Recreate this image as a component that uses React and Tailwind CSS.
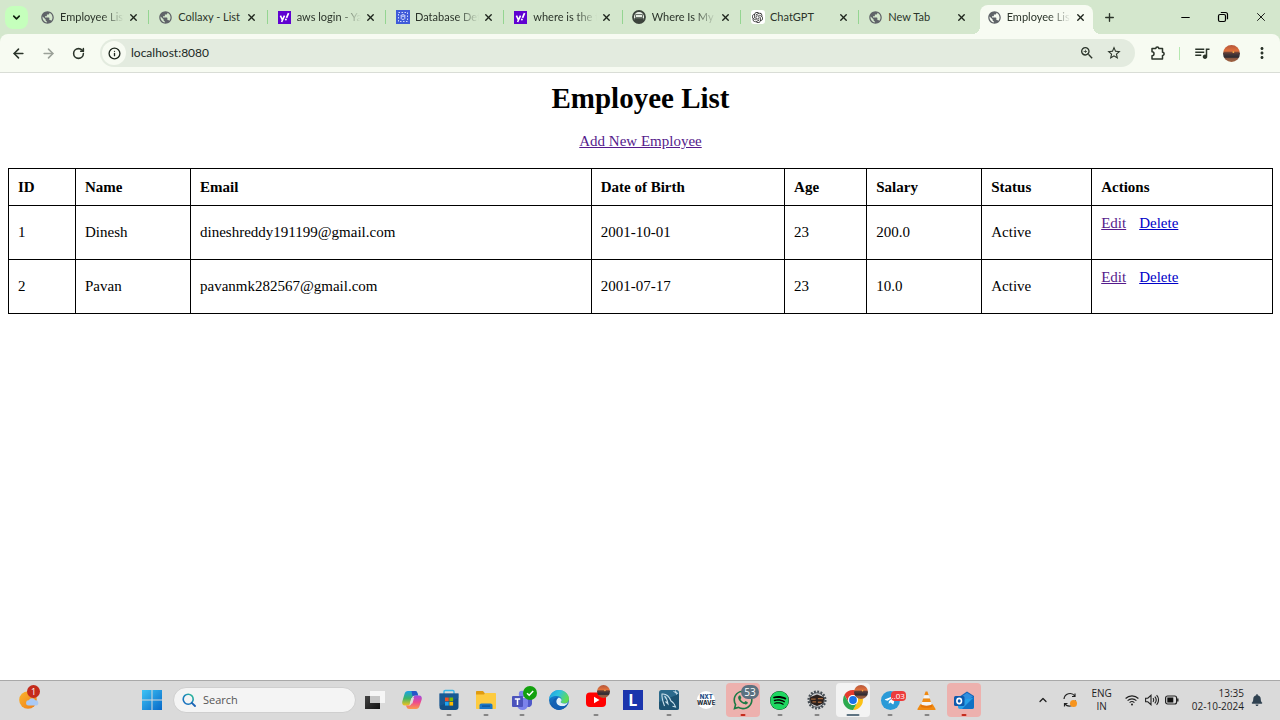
import React from "react";
import {
  MdPublic,
  MdQueueMusic,
  MdZoomIn,
  MdStarBorder,
  MdMoreVert,
} from "react-icons/md";
import { FaSpotify, FaWhatsapp, FaTelegramPlane, FaBell } from "react-icons/fa";
import { SiOpenai } from "react-icons/si";
import { ArrowLeft, ArrowRight, RotateCw, Info, X, Plus, ChevronDown, ChevronUp, Minus } from "lucide-react";

const Globe = () => <MdPublic className="size-[15px] text-[#5f6368]" />;

const Yahoo = () => (
  <svg viewBox="0 0 13 13" className="size-[13px]">
    <rect width="13" height="13" fill="#5f01d1" />
    <path d="M2.4 4.6 4.3 8.6M6.5 4.6 3.6 11" stroke="#fff" strokeWidth="1.6" fill="none" />
    <path d="M10.6 2.2 8.5 6.8" stroke="#fff" strokeWidth="1.7" />
    <circle cx="7.9" cy="8.6" r="1" fill="#fff" />
  </svg>
);

const Rds = () => (
  <svg viewBox="0 0 14 14" className="size-[14px]">
    <rect width="14" height="14" fill="#3f5bd9" />
    <g fill="none" stroke="#dfe6ff" strokeWidth=".9">
      <rect x="2.500" y="2.500" width="9" height="9" strokeDasharray="1.500 1.500" />
      <ellipse cx="7" cy="5.500" rx="1.800" ry=".8" />
      <path d="M5.200 5.500v3c0 1.200 3.600 1.200 3.600 0v-3" />
    </g>
  </svg>
);

const Train = () => (
  <svg viewBox="0 0 14 14" className="size-[14px]">
    <circle cx="7" cy="7" r="6" fill="#e8eee5" stroke="#3c443c" strokeWidth="1.800" />
    <path d="M2.500 8h9v2.500a6 6 0 0 1-9 0z" fill="#3c443c" />
    <rect x="3" y="4" width="8" height="4.500" rx="1" fill="#6a736a" />
    <rect x="4" y="5" width="6" height="2" fill="#e4ebe1" />
  </svg>
);

const ChatGpt = () => (
  <span className="flex size-[14px] items-center justify-center rounded-[3px] bg-white">
    <SiOpenai className="size-[11px] text-[#222]" />
  </span>
);

const tabs = [
  { title: "Employee List", icon: Globe },
  { title: "Collaxy - List", icon: Globe, short: true },
  { title: "aws login - Ya", icon: Yahoo },
  { title: "Database Det", icon: Rds },
  { title: "where is the t", icon: Yahoo },
  { title: "Where Is My", icon: Train },
  { title: "ChatGPT", icon: ChatGpt, short: true },
  { title: "New Tab", icon: Globe, short: true },
  { title: "Employee List", icon: Globe, active: true },
];

function Tab({ title, icon: Icon, active, last, short }) {
  return (
    <div className="relative flex h-full items-end">
      {active && (
        <div className="absolute top-[5px] right-[3px] bottom-0 left-[2px] rounded-t-lg bg-[#f7fbf2]">
          <span className="absolute bottom-0 -left-2 size-2 bg-[radial-gradient(circle_at_top_left,transparent_8px,#f7fbf2_8px)]" />
          <span className="absolute -right-2 bottom-0 size-2 bg-[radial-gradient(circle_at_top_right,transparent_8px,#f7fbf2_8px)]" />
        </div>
      )}
      <div className="relative flex h-full w-full items-center pr-[10px] pl-[9px]">
        <button
          role="tab"
          aria-selected={!!active}
          className="flex min-w-0 flex-1 items-center gap-[5px] text-left"
        >
          <span className="flex w-[15px] shrink-0 justify-center">
            <Icon />
          </span>
          <span
            className={
              short
                ? "whitespace-nowrap"
                : "whitespace-nowrap [mask-image:linear-gradient(to_right,black_42px,transparent_64px)]"
            }
          >
            {title}
          </span>
        </button>
        <button aria-label={`Close ${title}`} className="flex size-[12px] shrink-0 items-center justify-center">
          <X className="size-[11px] text-[#1d241c]" strokeWidth={3} />
        </button>
      </div>
      {!active && !last && (
        <span className="absolute top-[10px] right-0 h-[14px] w-px bg-[#94d591]" />
      )}
    </div>
  );
}

const Avatar = ({ className }) => (
  <svg viewBox="0 0 18 18" className={className}>
    <defs>
      <linearGradient id="sunset" x1="0" y1="0" x2="0" y2="1">
        <stop offset="0" stopColor="#b5563a" />
        <stop offset=".35" stopColor="#e0703c" />
        <stop offset=".5" stopColor="#4b3a3b" />
        <stop offset=".72" stopColor="#2e2a30" />
        <stop offset=".8" stopColor="#8d5a43" />
        <stop offset="1" stopColor="#a0603f" />
      </linearGradient>
    </defs>
    <circle cx="9" cy="9" r="9" fill="url(#sunset)" />
    <path d="M1 8h16v1.500H1z" fill="#5a3a35" />
    <circle cx="11" cy="7.500" r="1" fill="#ffb347" />
  </svg>
);

function Browser() {
  return (
    <header className="font-['Lato','Open_Sans',sans-serif] text-[#2b342a]">
      <div className="flex h-[34px] items-center bg-[#d4e7cd] text-[11px]">
        <button
          aria-label="Search tabs"
          className="ml-[5px] flex size-[23px] shrink-0 items-center justify-center rounded-lg bg-[#c5ffbc]"
        >
          <ChevronDown className="size-[11px] text-[#10200f]" strokeWidth={3.500} />
        </button>
        <div role="tablist" className="ml-[3px] grid h-full max-w-[1065px] flex-1 grid-cols-9">
          {tabs.map((t, i) => (
            <Tab key={i} {...t} last={i === 7} />
          ))}
        </div>
        <button aria-label="New tab" className="ml-[6px] flex size-[14px] items-center justify-center">
          <Plus className="size-[13px]" strokeWidth={2.500} />
        </button>
        <div className="ml-auto flex gap-[24px] pr-[12px] text-black">
          <button aria-label="Minimize" className="flex size-[14px] items-center justify-center">
            <Minus className="size-[13px]" strokeWidth={2} />
          </button>
          <button aria-label="Restore" className="flex size-[14px] items-center justify-center">
            <svg viewBox="0 0 12 12" className="size-[12px]" fill="none" stroke="currentColor" strokeWidth="1.200">
              <rect x="1.500" y="3.500" width="7" height="7" rx="1.500" />
              <path d="M3.800 1.500h4.700a2 2 0 0 1 2 2v4.700" />
            </svg>
          </button>
          <button aria-label="Close window" className="flex size-[14px] items-center justify-center">
            <X className="size-[14px]" strokeWidth={1.500} />
          </button>
        </div>
      </div>
      <div className="bg-[#d4e7cd]">
        <div className="flex h-[39px] items-center rounded-t-lg border-b border-[#d9ddd6] bg-[#f7fbf2]">
          <div className="flex w-[100px] shrink-0 items-center gap-[15px] pl-[11px]">
            <button aria-label="Back"><ArrowLeft className="size-[15px]" strokeWidth={2.500} /></button>
            <button aria-label="Forward"><ArrowRight className="size-[15px] text-[#9ba199]" strokeWidth={2.500} /></button>
            <button aria-label="Reload" className="pl-px"><RotateCw className="size-[13px]" strokeWidth={2.800} /></button>
          </div>
          <div className="flex h-7 flex-1 items-center rounded-full bg-[#e3ebdf] pr-[13px] pl-[2px]">
            <button aria-label="Site information" className="flex size-6 items-center justify-center rounded-full bg-[#f7fbf2]">
              <Info className="size-[13px] text-[#1c251b]" strokeWidth={2.400} />
            </button>
            <input
              aria-label="Address"
              defaultValue="localhost:8080"
              className="ml-[5px] min-w-0 flex-1 bg-transparent text-[12px] text-[#20281f] outline-none"
            />
            <div className="flex items-center gap-[11px]">
              <button aria-label="Zoom"><MdZoomIn className="size-[16px]" /></button>
              <button aria-label="Bookmark"><MdStarBorder className="size-[16px]" /></button>
            </div>
          </div>
          <button aria-label="Extensions" className="ml-[15px]">
            <svg viewBox="0 0 16 16" className="size-[16px]" fill="none" stroke="currentColor" strokeWidth="1.500" strokeLinejoin="round">
              <path d="M2 3.500h3.800a1.500 1.500 0 0 1 3 0h3.700v3.700a1.600 1.600 0 0 1 0 3.200V14H2v-3.200a2 2 0 0 0 0-4z" />
            </svg>
          </button>
          <span className="ml-[13px] h-[13px] w-px bg-[#b5e8b0]" />
          <button aria-label="Media controls" className="ml-[13px]"><MdQueueMusic className="size-[18px]" /></button>
          <button aria-label="Profile" className="ml-[12px]"><Avatar className="size-[17px]" /></button>
          <button aria-label="Menu" className="mr-[9px] ml-[13px]"><MdMoreVert className="size-[18px]" /></button>
        </div>
      </div>
    </header>
  );
}

const employees = [
  { id: 1, name: "Dinesh", email: "dineshreddy191199@gmail.com", dob: "2001-10-01", age: 23, salary: "200.0", status: "Active" },
  { id: 2, name: "Pavan", email: "pavanmk282567@gmail.com", dob: "2001-07-17", age: 23, salary: "10.0", status: "Active" },
];

const columns = [
  ["ID", "w-[5.3%]"],
  ["Name", "w-[9.1%]"],
  ["Email", "w-[31.7%]"],
  ["Date of Birth", "w-[15.3%]"],
  ["Age", "w-[6.5%]"],
  ["Salary", "w-[9.1%]"],
  ["Status", "w-[8.7%]"],
  ["Actions", "w-[14.3%]"],
];

function Page() {
  return (
    <main className="flex-1 pt-[7px] pr-[7px] pl-[8px] font-['Liberation_Serif',serif] text-[15px] leading-[17px] text-black">
      <h1 className="text-center text-[29px] leading-[36px] font-bold">Employee List</h1>
      <p className="mt-[17px] text-center">
        <a href="#new" className="text-[#551a8b] underline">Add New Employee</a>
      </p>
      <table className="mt-[18px] w-full table-fixed border-collapse">
        <thead>
          <tr className="h-[37px]">
            {columns.map(([label, width]) => (
              <th key={label} scope="col" className={`${width} border border-black px-[9px] text-left font-bold`}>
                {label}
              </th>
            ))}
          </tr>
        </thead>
        <tbody>
          {employees.map((e) => (
            <tr key={e.id} className="h-[54px]">
              {[e.id, e.name, e.email, e.dob, e.age, e.salary, e.status].map((v, i) => (
                <td key={i} className="border border-black px-[9px]">{v}</td>
              ))}
              <td className="border border-black px-[9px] pt-[9px] align-top">
                <div className="flex gap-[13px]">
                  <a href={`#edit-${e.id}`} className="text-[#551a8b] underline">Edit</a>
                  <a href={`#delete-${e.id}`} className="text-[#0000c8] underline">Delete</a>
                </div>
              </td>
            </tr>
          ))}
        </tbody>
      </table>
    </main>
  );
}

const TaskView = () => (
  <svg viewBox="0 0 22 22" className="size-[22px]">
    <defs>
      <linearGradient id="tv" x1="0" y1="0" x2="1" y2="1"><stop stopColor="#444" /><stop offset="1" stopColor="#111" /></linearGradient>
    </defs>
    <rect x="1" y="7" width="15" height="13" fill="url(#tv)" />
    <rect x="6" y="2" width="15" height="12" fill="#f6f6f6" />
    <rect x="6" y="7" width="10" height="7" fill="#c6c6c6" />
  </svg>
);

const Copilot = () => (
  <svg viewBox="0 0 22 22" className="size-[22px]">
    <defs>
      <linearGradient id="cpa" x1="0" y1="0" x2="0" y2="1"><stop stopColor="#1aa0e8" /><stop offset=".5" stopColor="#3bb56a" /><stop offset="1" stopColor="#f4c21c" /></linearGradient>
      <linearGradient id="cpb" x1="0" y1="0" x2="0" y2="1"><stop stopColor="#a24be0" /><stop offset=".5" stopColor="#ee4a8d" /><stop offset="1" stopColor="#fb9a4b" /></linearGradient>
    </defs>
    <path d="M7 2h7c1.500 0 2 .8 2.400 2l.8 2.500h-3.500c-1.500 0-2.200.8-2.700 2.300L9 14.500c-.5 1.500-1.200 2-2.500 2H4C1.500 16.500.8 14.800 1.300 12.500L3.500 5C4 3 5.200 2 7 2z" fill="url(#cpa)" />
    <path d="M10.500 2H14c1.500 0 2 .8 2.400 2l.8 2.500h-3.500c-1 0-1.700.3-2.200 1z" fill="#2456c8" />
    <path d="M15 20H8c-1.500 0-2-.8-2.400-2l-.7-1.500h3c1.500 0 2.200-.8 2.700-2.300L12.500 8.500c.5-1.500 1.200-2 2.500-2h3c2.500 0 3.200 1.700 2.700 4L18.500 17c-.5 2-1.700 3-3.500 3z" fill="url(#cpb)" />
    <path d="m10.400 9-1.700 5.500h2.700L13 9z" fill="#dcdcdc" />
  </svg>
);

const Store = () => (
  <svg viewBox="0 0 22 22" className="size-[22px]">
    <path d="M6 5V2.700C6 2 6.500 1.500 7.200 1.500h7.600c.7 0 1.200.5 1.200 1.200V5" fill="none" stroke="#35b6ea" strokeWidth="1.400" />
    <path d="M1.500 4.500h19V18a3 3 0 0 1-3 3h-13a3 3 0 0 1-3-3z" fill="#144f85" />
    <path d="M1.500 4.500h19V9l-19 8z" fill="#1a62a0" opacity=".6" />
    <path d="M7 8.500h3.700v3.700H7z" fill="#f25022" />
    <path d="M11.400 8.500h3.700v3.700h-3.700z" fill="#7fba00" />
    <path d="M7 12.900h3.700v3.700H7z" fill="#20a4ef" />
    <path d="M11.400 12.900h3.700v3.700h-3.700z" fill="#ffb900" />
  </svg>
);

const Explorer = () => (
  <svg viewBox="0 0 22 22" className="size-[22px]">
    <path d="M1 3c0-.6.4-1 1-1h6l2 2.500v3H1z" fill="#e09b10" />
    <path d="M1 5.500h8L10.500 4H20c.6 0 1 .4 1 1v14c0 .6-.4 1-1 1H2c-.6 0-1-.4-1-1z" fill="#fdcb40" />
    <path d="M4.500 20v-3.500c0-1.200.8-2 2-2h9c1.200 0 2 .8 2 2V20z" fill="#1976c8" />
    <path d="M7 16.500h8v1.200H7z" fill="#0d4f93" />
  </svg>
);

const Teams = () => (
  <span className="relative">
    <svg viewBox="0 0 22 22" className="size-[22px]">
      <circle cx="11" cy="5" r="3.200" fill="#7b83eb" />
      <circle cx="18" cy="6" r="2.200" fill="#5059c9" />
      <path d="M15 9h6v6a3.500 3.500 0 0 1-6 2z" fill="#5059c9" />
      <path d="M6 9h11v6.500a5.500 5.500 0 0 1-11 0z" fill="#7b83eb" />
      <rect x="1" y="7" width="11" height="11" rx="1" fill="#4b53bc" />
      <path d="M3.800 10h5.400M6.500 10v6" stroke="#fff" strokeWidth="1.500" />
    </svg>
    <svg viewBox="0 0 14 14" className="absolute -top-[3px] left-[12px] size-[14px]">
      <circle cx="7" cy="7" r="7" fill="#13a10e" />
      <path d="m4 7.200 2.200 2.100L10.200 5" fill="none" stroke="#fff" strokeWidth="1.500" />
    </svg>
  </span>
);

const Edge = () => (
  <svg viewBox="0 0 22 22" className="size-[22px]">
    <defs>
      <linearGradient id="edg" x1="0" y1="0" x2="1" y2=".4"><stop stopColor="#1d9de0" /><stop offset=".5" stopColor="#2fc2df" /><stop offset="1" stopColor="#5fdc55" /></linearGradient>
      <linearGradient id="edb" x1="0" y1="0" x2="0" y2="1"><stop stopColor="#1b8fe0" /><stop offset="1" stopColor="#0b4f9e" /></linearGradient>
    </defs>
    <circle cx="11" cy="11" r="10" fill="url(#edb)" />
    <path d="M1 11C1.200 5.500 5.500 1 11 1s10 4.200 10 8.800c0 3-2.200 4.700-5 4.700-2.200 0-3.300-.8-3.300-1.400 0-.5.900-.9.900-2.400C13.600 8.400 11.500 7 8.500 7 4.500 7 1.500 9 1 11z" fill="url(#edg)" />
    <path d="M8.200 12.500c0-1.800 1-3.300 2.600-4 1.800.6 2.800 1.700 2.800 2.600 0 1.100-.9 1.400-.9 2 0 .6 1.100 1.400 3.300 1.400 1.700 0 3-.5 4-1.500-.8 2.600-2.600 4.300-5 4.300-3.500 0-6.800-1.500-6.800-4.800z" fill="#dff0fa" />
    <path d="M8.200 12.500c0 3.300 3.300 4.800 6.800 4.800 1.500 0 2.700-.5 3.600-1.200C17 19.200 14.200 21 11 21c-4 0-6.500-3-6.500-6.500 0-3 2-5.500 4-6 1 0 1.600 0 2.300.1-1.600.7-2.600 2.100-2.600 3.900z" fill="#1260b4" />
  </svg>
);

const YouTube = () => (
  <span className="relative">
    <svg viewBox="0 0 22 22" className="size-[22px]">
      <rect x="1" y="3.500" width="20" height="14.500" rx="4" fill="#f00" />
      <path d="m9 7.800 5.500 3.200L9 14.200z" fill="#fff" />
    </svg>
    <Avatar className="absolute -top-[4px] left-[12px] size-[13px]" />
  </span>
);

const LetterL = () => (
  <span className="flex size-[20px] items-center justify-center bg-[#1b35ad] font-['Open_Sans',sans-serif] text-[16px] leading-none font-bold text-white">
    L
  </span>
);

const MySql = () => (
  <svg viewBox="0 0 22 22" className="size-[22px]">
    <rect x="1" y="1" width="20" height="20" rx="2.500" fill="#2c6a8c" />
    <path d="M1 13 21 5v13.500a2.500 2.500 0 0 1-2.500 2.500h-15A2.500 2.500 0 0 1 1 18.500z" fill="#1d5271" />
    <path d="M6.500 17c-1.500-4-3-8-2.500-12C8.500 4.500 11.500 8 13 12c2 1 3.500 3 4.500 6l-3-.8M6.500 7c2 2 3 5 3.500 8l-2.500-2.500" fill="none" stroke="#c9dfea" strokeWidth="1.100" />
    <path d="m15.500 2.500 4.500 2M17.500 1.500l1 4" stroke="#cfe3ee" strokeWidth="1" />
  </svg>
);

const NxtWave = () => (
  <span className="flex size-[18px] flex-col items-center justify-center rounded-full bg-white font-['Inter',sans-serif] text-[6px] leading-[6px] font-extrabold text-[#1f4e86]">
    <span>NXT</span>
    <span className="text-[#27313c]">WAVE</span>
  </span>
);

const WhatsApp = () => (
  <span className="relative">
    <FaWhatsapp className="size-[22px] text-[#1c7a45]" />
    <span className="absolute -top-[4px] left-[9px] flex h-[14px] w-[18px] items-center justify-center rounded-full bg-[#5c7180] text-[10px] leading-none text-white">
      53
    </span>
  </span>
);

const Spotify = () => (
  <span className="flex size-[19px] rounded-full bg-black">
    <FaSpotify className="size-[19px] text-[#1ed760]" />
  </span>
);

const Gear = () => (
  <svg viewBox="0 0 22 22" className="size-[20px]">
    <circle cx="11" cy="11" r="9.300" fill="none" stroke="#444b52" strokeWidth="2.400" strokeDasharray="2.100 1.550" />
    <circle cx="11" cy="11" r="8" fill="#c9ccd0" stroke="#39424a" strokeWidth="1" />
    <path d="M3 8.500 6 7l5-2 5 2 3 1.500-1 6-3 1.500-4 1.500L7 16l-3-1.500z" fill="#2b201d" />
    <path d="M4.500 10h5M12 9.500h5.500M6 13h4M12 13.500h4" stroke="#a4673c" strokeWidth="1.500" />
  </svg>
);

const Chrome = () => (
  <span className="relative">
    <svg viewBox="0 0 22 22" className="size-[22px]">
      <path d="M11 6h8.660A10 10 0 0 0 2.340 6l4.330 7.500A5 5 0 0 1 11 6z" fill="#e33b2e" />
      <path d="M15.330 13.500 11 21A10 10 0 0 0 19.660 6H11a5 5 0 0 1 4.330 7.500z" fill="#fbc116" />
      <path d="M6.670 13.500 2.340 6A10 10 0 0 0 11 21l4.330-7.500a5 5 0 0 1-8.660 0z" fill="#2da94f" />
      <circle cx="11" cy="11" r="5" fill="#fff" />
      <circle cx="11" cy="11" r="3.900" fill="#1a73e8" />
    </svg>
    <Avatar className="absolute -top-[4px] left-[12px] size-[14px]" />
  </span>
);

const Telegram = () => (
  <span className="relative">
    <span className="flex size-[19px] items-center justify-center rounded-full bg-[#2a9ad7]">
      <FaTelegramPlane className="size-[12px] text-white" />
    </span>
    <span className="absolute top-0 left-[10px] flex h-[10px] items-center rounded-[4px] bg-[#ec3b3b] px-px text-[8px] leading-none text-white">
      ..03
    </span>
  </span>
);

const Vlc = () => (
  <svg viewBox="0 0 22 22" className="size-[21px]">
    <path d="M4.500 15h13l3 5c.3.500 0 1-.6 1H2.100c-.6 0-.9-.5-.6-1z" fill="#f08a12" />
    <path d="M10 1.500h2l1.300 4H8.700z" fill="#f08a12" />
    <path d="M8.700 5.500h4.600L14.500 9h-7z" fill="#f4f4f4" />
    <path d="M7.500 9h7l1.100 3.500H6.400z" fill="#f08a12" />
    <path d="M6.400 12.500h9.200l1 3c-1.500 1.800-9.700 1.800-11.200 0z" fill="#f4f4f4" />
    <path d="M5.500 15c1.500 2 9.500 2 11 0l.5 2.200c-2 2-10 2-12 0z" fill="#e57307" />
  </svg>
);

const Outlook = () => (
  <svg viewBox="0 0 22 22" className="size-[22px]">
    <path d="M6 8 14 2.500 21 7v4l-8 4H6z" fill="#1565b8" />
    <path d="M8 8 14 3.800 20 7.500 13.500 12z" fill="#2f8fe0" />
    <path d="M5 12 21 8.500V18a2 2 0 0 1-2 2H7a2 2 0 0 1-2-2z" fill="#27a0e8" />
    <path d="M21 8 9 20h10a2 2 0 0 0 2-2z" fill="#1271c4" />
    <rect x="1" y="7" width="10.500" height="10" rx="1.500" fill="#0f5aad" />
    <ellipse cx="6.200" cy="12" rx="2.300" ry="2.600" fill="none" stroke="#fff" strokeWidth="1.600" />
  </svg>
);

const apps = [
  { name: "Task view", icon: TaskView },
  { name: "Copilot", icon: Copilot },
  { name: "Microsoft Store", icon: Store, mark: "bg-[#858585] w-[5px]" },
  { name: "File Explorer", icon: Explorer, mark: "bg-[#858585] w-[5px]" },
  { name: "Teams", icon: Teams, mark: "bg-[#858585] w-[5px]" },
  { name: "Edge", icon: Edge },
  { name: "YouTube", icon: YouTube, mark: "bg-[#858585] w-[5px]" },
  { name: "Lightshot", icon: LetterL },
  { name: "MySQL Workbench", icon: MySql, mark: "bg-[#858585] w-[5px]" },
  { name: "NxtWave", icon: NxtWave },
  { name: "WhatsApp", icon: WhatsApp, mark: "bg-[#c42b1c] w-[5px]", bg: "bg-[#edb1ae]" },
  { name: "Spotify", icon: Spotify, mark: "bg-[#858585] w-[5px]" },
  { name: "Spring Tool Suite", icon: Gear, mark: "bg-[#858585] w-[5px]" },
  { name: "Chrome", icon: Chrome, mark: "bg-[#5f7483] w-[13px]", bg: "bg-[#f3f3f3]" },
  { name: "Telegram", icon: Telegram, mark: "bg-[#858585] w-[5px]" },
  { name: "VLC", icon: Vlc, mark: "bg-[#858585] w-[5px]" },
  { name: "Outlook", icon: Outlook, mark: "bg-[#c42b1c] w-[5px]", bg: "bg-[#edb1ae]" },
];

function Taskbar() {
  return (
    <footer className="flex h-[40px] items-center border-t border-[#a9a9a9] bg-[#dadada] pb-px font-['Open_Sans','Noto_Sans',sans-serif] text-[#1f1f1f]">
      <button aria-label="Weather" className="relative ml-[18px] size-[22px] shrink-0">
        <svg viewBox="0 0 22 22" className="size-[22px]">
          <defs>
            <linearGradient id="moon" x1="0" y1="0" x2="1" y2="1"><stop stopColor="#fbb52c" /><stop offset="1" stopColor="#ee7d1c" /></linearGradient>
          </defs>
          <circle cx="10" cy="11" r="8.800" fill="url(#moon)" />
          <path d="M10.500 16.500a2.600 2.600 0 0 1 .3-5.200 3.600 3.600 0 0 1 6.500 0 2.600 2.600 0 0 1 .8 5.200z" fill="#a9c9f5" />
        </svg>
        <span className="absolute -top-[4px] left-[9px] flex size-[13px] items-center justify-center rounded-full bg-[#c42b1c] text-[9px] leading-none text-white">
          1
        </span>
      </button>
      <button aria-label="Start" className="ml-[102px] shrink-0">
        <svg viewBox="0 0 20 20" className="size-[20px]">
          <defs>
            <linearGradient id="win" x1="0" y1="0" x2="1" y2="1"><stop stopColor="#3fc4f5" /><stop offset="1" stopColor="#0668c8" /></linearGradient>
          </defs>
          <path d="M0 0h9.500v9.500H0zM10.500 0H20v9.500h-9.500zM0 10.500h9.500V20H0zM10.500 10.500H20V20h-9.500z" fill="url(#win)" />
        </svg>
      </button>
      <label className="ml-[11px] flex h-[26px] w-[183px] shrink-0 items-center gap-[7px] rounded-full border border-[#cfcfcf] bg-[#f4f4f4] pl-[8px]">
        <svg viewBox="0 0 14 14" className="size-[14px]" fill="none">
          <defs>
            <linearGradient id="sr" x1="0" y1="1" x2="1" y2="0"><stop stopColor="#1566c0" /><stop offset=".6" stopColor="#1f8fb8" /><stop offset="1" stopColor="#2fc48d" /></linearGradient>
          </defs>
          <circle cx="6.200" cy="6.200" r="5" stroke="url(#sr)" strokeWidth="1.600" />
          <path d="m9.800 9.800 3.200 3.200" stroke="#1b63b5" strokeWidth="1.800" strokeLinecap="round" />
        </svg>
        <input
          aria-label="Search"
          placeholder="Search"
          className="w-0 flex-1 bg-transparent text-[11px] outline-none placeholder:text-[#555]"
        />
      </label>
      <nav aria-label="Apps" className="ml-px grid max-w-[625px] flex-1 grid-cols-17">
        {apps.map(({ name, icon: Icon, mark, bg }) => (
          <button
            key={name}
            aria-label={name}
            className={`relative mx-auto flex h-[34px] w-[34px] items-center justify-center rounded ${bg || ""}`}
          >
            <Icon />
            {mark && <span className={`absolute bottom-px left-1/2 h-[2px] -translate-x-1/2 rounded-full ${mark}`} />}
          </button>
        ))}
      </nav>
      <div className="ml-auto flex items-center pr-[17px] text-[10px] leading-[13px]">
        <button aria-label="Show hidden icons"><ChevronUp className="size-[12px]" strokeWidth={2.500} /></button>
        <button aria-label="Updates" className="ml-[13px]">
          <svg viewBox="0 0 16 16" className="size-[16px]" fill="none">
            <path d="M2 7a6 6 0 0 1 10.800-3M13 1.500V4.500h-3M13.500 8.500a6 6 0 0 1-10.500 3.500M2.500 14.500v-3h3" stroke="#222" strokeWidth="1.200" />
            <circle cx="11.500" cy="11.500" r="3.500" fill="#f7941d" />
          </svg>
        </button>
        <button className="ml-[13px] text-center">
          ENG
          <br />
          IN
        </button>
        <button aria-label="Network, volume and battery" className="ml-[13px] flex items-center gap-[6px]">
          <svg viewBox="0 0 14 12" className="h-[12px] w-[14px]" fill="none" stroke="#222" strokeWidth="1.100">
            <path d="M.6 4.500a9 9 0 0 1 12.800 0M2.600 6.700a6.200 6.200 0 0 1 8.800 0M4.600 8.700a3.400 3.400 0 0 1 4.800 0" />
            <circle cx="7" cy="10.500" r="1" fill="#222" stroke="none" />
          </svg>
          <svg viewBox="0 0 14 12" className="h-[12px] w-[14px]" fill="none" stroke="#222" strokeWidth="1.100">
            <path d="M.6 4.200h2.200L6 1.300v9.400L2.800 7.800H.6zM8 4.200a3 3 0 0 1 0 3.600M9.800 2.700a5 5 0 0 1 0 6.600M11.600 1.200a7 7 0 0 1 0 9.600" />
          </svg>
          <svg viewBox="0 0 14 10" className="h-[10px] w-[14px]">
            <rect x=".6" y="1" width="11" height="8" rx="2" fill="none" stroke="#222" strokeWidth="1.200" />
            <rect x="2.300" y="2.500" width="6" height="5" fill="#111" />
            <path d="M12.800 3.500v3" stroke="#222" strokeWidth="1.400" />
          </svg>
        </button>
        <button className="ml-[13px] text-right">
          13:35
          <br />
          02-10-2024
        </button>
        <button aria-label="Notifications" className="ml-[7px]"><FaBell className="size-[12px] text-[#2f4150]" /></button>
      </div>
    </footer>
  );
}

export default function App() {
  return (
    <div className="flex min-h-screen flex-col bg-white">
      <Browser />
      <Page />
      <Taskbar />
    </div>
  );
}
